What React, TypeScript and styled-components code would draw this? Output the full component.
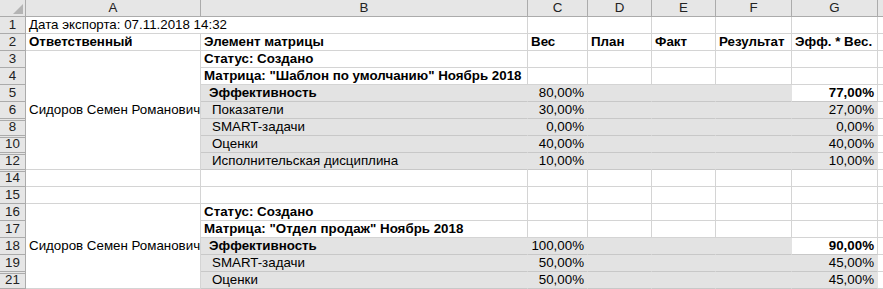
import React from "react";
import styled, { createGlobalStyle, css } from "styled-components";

const GlobalStyle = createGlobalStyle`
  html, body { margin: 0; padding: 0; background: #ffffff; }
  body { font-family: "Liberation Sans", Arial, sans-serif; }
`;

const GRID = "#d4d4d4";
const FILL = "#e3e3e3";
const FILL_LINE = "#c8c8c8";
const HEAD_BG = "#e6e6e6";
const HEAD_LINE = "#ababab";

const Sheet = styled.div`
  display: grid;
  grid-template-columns: 26px 175px 327px 60px 64px 64px 76px 86px 1fr;
  grid-auto-rows: 17px;
  width: 883px;
  height: 289px;
  overflow: hidden;
  font-size: 13.33px;
  color: #000;
`;

const ColHead = styled.div`
  box-sizing: border-box;
  background: ${HEAD_BG};
  border-right: 1px solid ${HEAD_LINE};
  border-bottom: 1px solid ${HEAD_LINE};
  display: flex;
  align-items: center;
  justify-content: center;
  color: #222;
  font-size: 13.33px;
  line-height: 16px;
`;

const Corner = styled(ColHead)`
  justify-content: flex-end;
  align-items: flex-end;
  padding: 0 2px 2px 0;
`;

const RowHead = styled.div<{ $afterHidden?: boolean }>`
  box-sizing: border-box;
  background: ${HEAD_BG};
  border-right: 1px solid ${HEAD_LINE};
  border-bottom: 1px solid ${HEAD_LINE};
  display: flex;
  align-items: center;
  justify-content: center;
  color: #222;
  line-height: 16px;
  ${(p) =>
    p.$afterHidden &&
    css`
      background: linear-gradient(
          to bottom,
          transparent 1px,
          ${HEAD_LINE} 1px,
          ${HEAD_LINE} 2px,
          transparent 2px
        ),
        ${HEAD_BG};
    `}
`;

type Tone = "plain" | "fill";

const Cell = styled.div<{
  $tone?: Tone;
  $align?: "left" | "right" | "center";
  $bold?: boolean;
  $indent?: number;
  $span?: number;
  $rows?: number;
  $middle?: boolean;
}>`
  box-sizing: border-box;
  display: flex;
  align-items: ${(p) => (p.$middle ? "center" : "flex-end")};
  justify-content: ${(p) =>
    p.$align === "right" ? "flex-end" : p.$align === "center" ? "center" : "flex-start"};
  padding: 0 3px 1px ${(p) => 3 + (p.$indent ?? 0)}px;
  white-space: nowrap;
  overflow: visible;
  line-height: 15px;
  font-weight: ${(p) => (p.$bold ? 700 : 400)};
  background: ${(p) => (p.$tone === "fill" ? FILL : "#ffffff")};
  border-right: 1px solid ${(p) => (p.$tone === "fill" ? FILL : GRID)};
  border-bottom: 1px solid ${(p) => (p.$tone === "fill" ? FILL_LINE : GRID)};
  ${(p) => p.$span && css`grid-column: span ${p.$span};`}
  ${(p) => p.$rows && css`grid-row: span ${p.$rows};`}
`;

/* G cell of a total row stays white but sits between filled rows */
const TotalCell = styled(Cell)`
  border-bottom-color: ${FILL_LINE};
`;

const CornerMark = () => (
  <svg width="10" height="10" viewBox="0 0 10 10">
    <polygon points="10,0 10,10 0,10" fill="#b4b4b4" />
  </svg>
);

type Line =
  | { n: number; kind: "blank"; afterHidden?: boolean }
  | { n: number; kind: "title"; text: string; afterHidden?: boolean }
  | { n: number; kind: "total"; label: string; weight: string; result: string; afterHidden?: boolean }
  | { n: number; kind: "item"; label: string; weight: string; result: string; afterHidden?: boolean };

interface Block {
  owner: string;
  lines: Line[];
}

const blocks: Block[] = [
  {
    owner: "Сидоров Семен Романович",
    lines: [
      { n: 3, kind: "title", text: "Статус: Создано" },
      { n: 4, kind: "title", text: "Матрица: \"Шаблон по умолчанию\" Ноябрь 2018" },
      { n: 5, kind: "total", label: "Эффективность", weight: "80,00%", result: "77,00%" },
      { n: 6, kind: "item", label: "Показатели", weight: "30,00%", result: "27,00%" },
      { n: 8, kind: "item", label: "SMART-задачи", weight: "0,00%", result: "0,00%", afterHidden: true },
      { n: 10, kind: "item", label: "Оценки", weight: "40,00%", result: "40,00%", afterHidden: true },
      { n: 12, kind: "item", label: "Исполнительская дисциплина", weight: "10,00%", result: "10,00%", afterHidden: true },
    ],
  },
  {
    owner: "",
    lines: [
      { n: 14, kind: "blank", afterHidden: true },
    ],
  },
  {
    owner: "",
    lines: [{ n: 15, kind: "blank" }],
  },
  {
    owner: "Сидоров Семен Романович",
    lines: [
      { n: 16, kind: "title", text: "Статус: Создано" },
      { n: 17, kind: "title", text: "Матрица: \"Отдел продаж\" Ноябрь 2018" },
      { n: 18, kind: "total", label: "Эффективность", weight: "100,00%", result: "90,00%" },
      { n: 19, kind: "item", label: "SMART-задачи", weight: "50,00%", result: "45,00%" },
      { n: 21, kind: "item", label: "Оценки", weight: "50,00%", result: "45,00%", afterHidden: true },
    ],
  },
];

const columns = ["A", "B", "C", "D", "E", "F", "G"];

function LineCells({ line }: { line: Line }) {
  switch (line.kind) {
    case "blank":
      return (
        <>
          <Cell />
          <Cell />
          <Cell />
          <Cell />
          <Cell />
          <Cell />
        </>
      );
    case "title":
      return (
        <>
          <Cell $bold>{line.text}</Cell>
          <Cell />
          <Cell />
          <Cell />
          <Cell />
          <Cell />
        </>
      );
    case "total":
      return (
        <>
          <Cell $tone="fill" $bold $indent={5}>
            {line.label}
          </Cell>
          <Cell $tone="fill" $align="right">
            {line.weight}
          </Cell>
          <Cell $tone="fill" />
          <Cell $tone="fill" />
          <Cell $tone="fill" />
          <TotalCell $align="right" $bold>
            {line.result}
          </TotalCell>
        </>
      );
    case "item":
      return (
        <>
          <Cell $tone="fill" $indent={8}>
            {line.label}
          </Cell>
          <Cell $tone="fill" $align="right">
            {line.weight}
          </Cell>
          <Cell $tone="fill" />
          <Cell $tone="fill" />
          <Cell $tone="fill" />
          <Cell $tone="fill" $align="right">
            {line.result}
          </Cell>
        </>
      );
  }
}

export default function App() {
  return (
    <>
      <GlobalStyle />
      <Sheet>
        <Corner>
          <CornerMark />
        </Corner>
        {columns.map((c) => (
          <ColHead key={c}>{c}</ColHead>
        ))}
        <ColHead />

        <RowHead>1</RowHead>
        <Cell $span={2}>Дата экспорта: 07.11.2018 14:32</Cell>
        <Cell />
        <Cell />
        <Cell />
        <Cell />
        <Cell />
        <Cell />

        <RowHead>2</RowHead>
        <Cell $bold>Ответственный</Cell>
        <Cell $bold>Элемент матрицы</Cell>
        <Cell $bold>Вес</Cell>
        <Cell $bold>План</Cell>
        <Cell $bold>Факт</Cell>
        <Cell $bold>Результат</Cell>
        <Cell $bold>Эфф. * Вес.</Cell>
        <Cell />

        {blocks.map((block, bi) =>
          block.lines.map((line, li) => (
            <React.Fragment key={`${bi}-${line.n}`}>
              <RowHead $afterHidden={line.afterHidden}>{line.n}</RowHead>
              {li === 0 && (
                <Cell $rows={block.lines.length} $middle>
                  {block.owner}
                </Cell>
              )}
              <LineCells line={line} />
              <Cell />
            </React.Fragment>
          ))
        )}
      </Sheet>
    </>
  );
}
